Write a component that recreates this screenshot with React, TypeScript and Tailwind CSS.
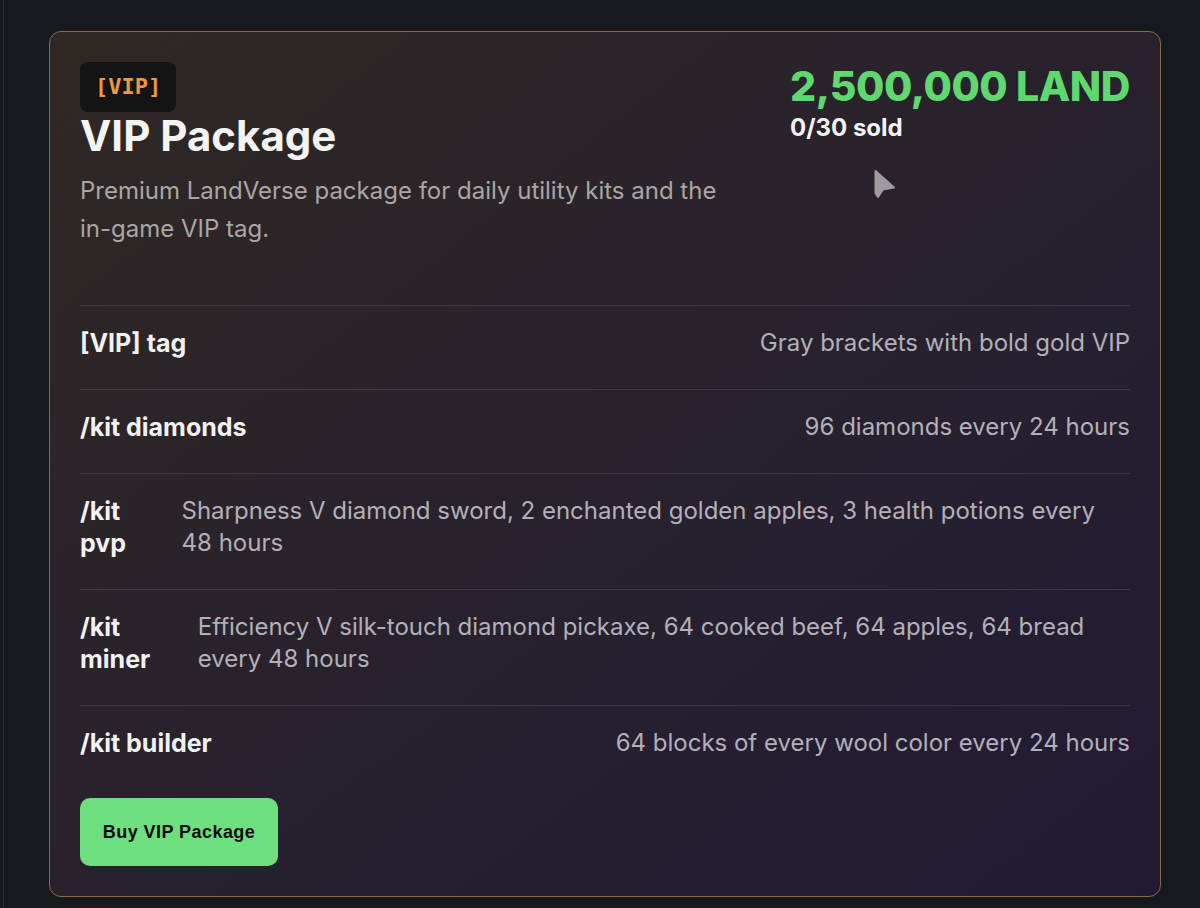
import React from "react";

interface Perk {
  label: string;
  detail: string;
}

const perks: Perk[] = [
  { label: "[VIP] tag", detail: "Gray brackets with bold gold VIP" },
  { label: "/kit diamonds", detail: "96 diamonds every 24 hours" },
  {
    label: "/kit pvp",
    detail: "Sharpness V diamond sword, 2 enchanted golden apples, 3 health potions every 48 hours",
  },
  {
    label: "/kit miner",
    detail: "Efficiency V silk-touch diamond pickaxe, 64 cooked beef, 64 apples, 64 bread every 48 hours",
  },
  { label: "/kit builder", detail: "64 blocks of every wool color every 24 hours" },
];

function Pointer() {
  return (
    <svg
      className="absolute left-[823px] top-[136px] w-[24px] h-[32px]"
      viewBox="0 0 24 32"
      fill="#9d9ba0"
    >
      <path
        d="M2.5 3 L21 19.5 L10 21.5 L5 29 L2.5 25 Z"
        stroke="#9d9ba0"
        strokeWidth="2"
        strokeLinejoin="round"
      />
    </svg>
  );
}

export default function App() {
  return (
    <div className="min-h-[908px] bg-[#16191d] font-['Inter',sans-serif]">
      <div className="ml-[3px] min-h-[908px] border-l border-[#262b31] pt-[31px]">
        <div className="relative ml-[45px] w-[1112px] rounded-[12px] border border-[#8d6b46] bg-gradient-to-br from-[#2f2824] to-[#221a35] p-[30px]">
          <Pointer />

          <div className="flex items-start justify-between gap-8">
            <div>
              <span className="inline-block rounded-lg bg-[#141414] px-[15px] py-3 font-['DejaVu_Sans_Mono',monospace] text-[22px] leading-[26px] font-bold text-[#ec9a3e]">
                [VIP]
              </span>
              <h2 className="text-[42px] leading-[48px] font-bold text-[#f4f4f4]">
                VIP Package
              </h2>
              <p className="mt-3 max-w-[672px] text-[24px] leading-[38px] text-[#a9a6a4]">
                Premium LandVerse package for daily utility kits and the{" "}
                <span className="whitespace-nowrap">in-game</span> VIP tag.
              </p>
            </div>
            <div className="shrink-0">
              <div className="text-[41px] leading-[48px] font-extrabold tracking-[-0.01em] text-[#5fd86f]">
                2,500,000 LAND
              </div>
              <div className="mt-0.5 text-[24px] leading-[32px] font-bold text-[#f4f4f4]">
                0/30 sold
              </div>
            </div>
          </div>

          <ul className="mt-[57px]">
            {perks.map((perk) => (
              <li
                key={perk.label}
                className="flex justify-between gap-4 border-t border-white/10 pt-[21px] pb-[30px] leading-[32px]"
              >
                <span className="text-[25px] font-bold text-[#f2f2f2]">{perk.label}</span>
                <span className="text-[24px] text-[#b3b0b8]">{perk.detail}</span>
              </li>
            ))}
          </ul>

          <button className="mt-[9px] flex h-[68px] w-[198px] items-center justify-center rounded-[10px] bg-[#6edf7e] font-['Liberation_Sans',sans-serif] text-[18px] font-bold tracking-[0.025em] text-[#0a0a0a]">
            Buy VIP Package
          </button>
        </div>
      </div>
    </div>
  );
}
